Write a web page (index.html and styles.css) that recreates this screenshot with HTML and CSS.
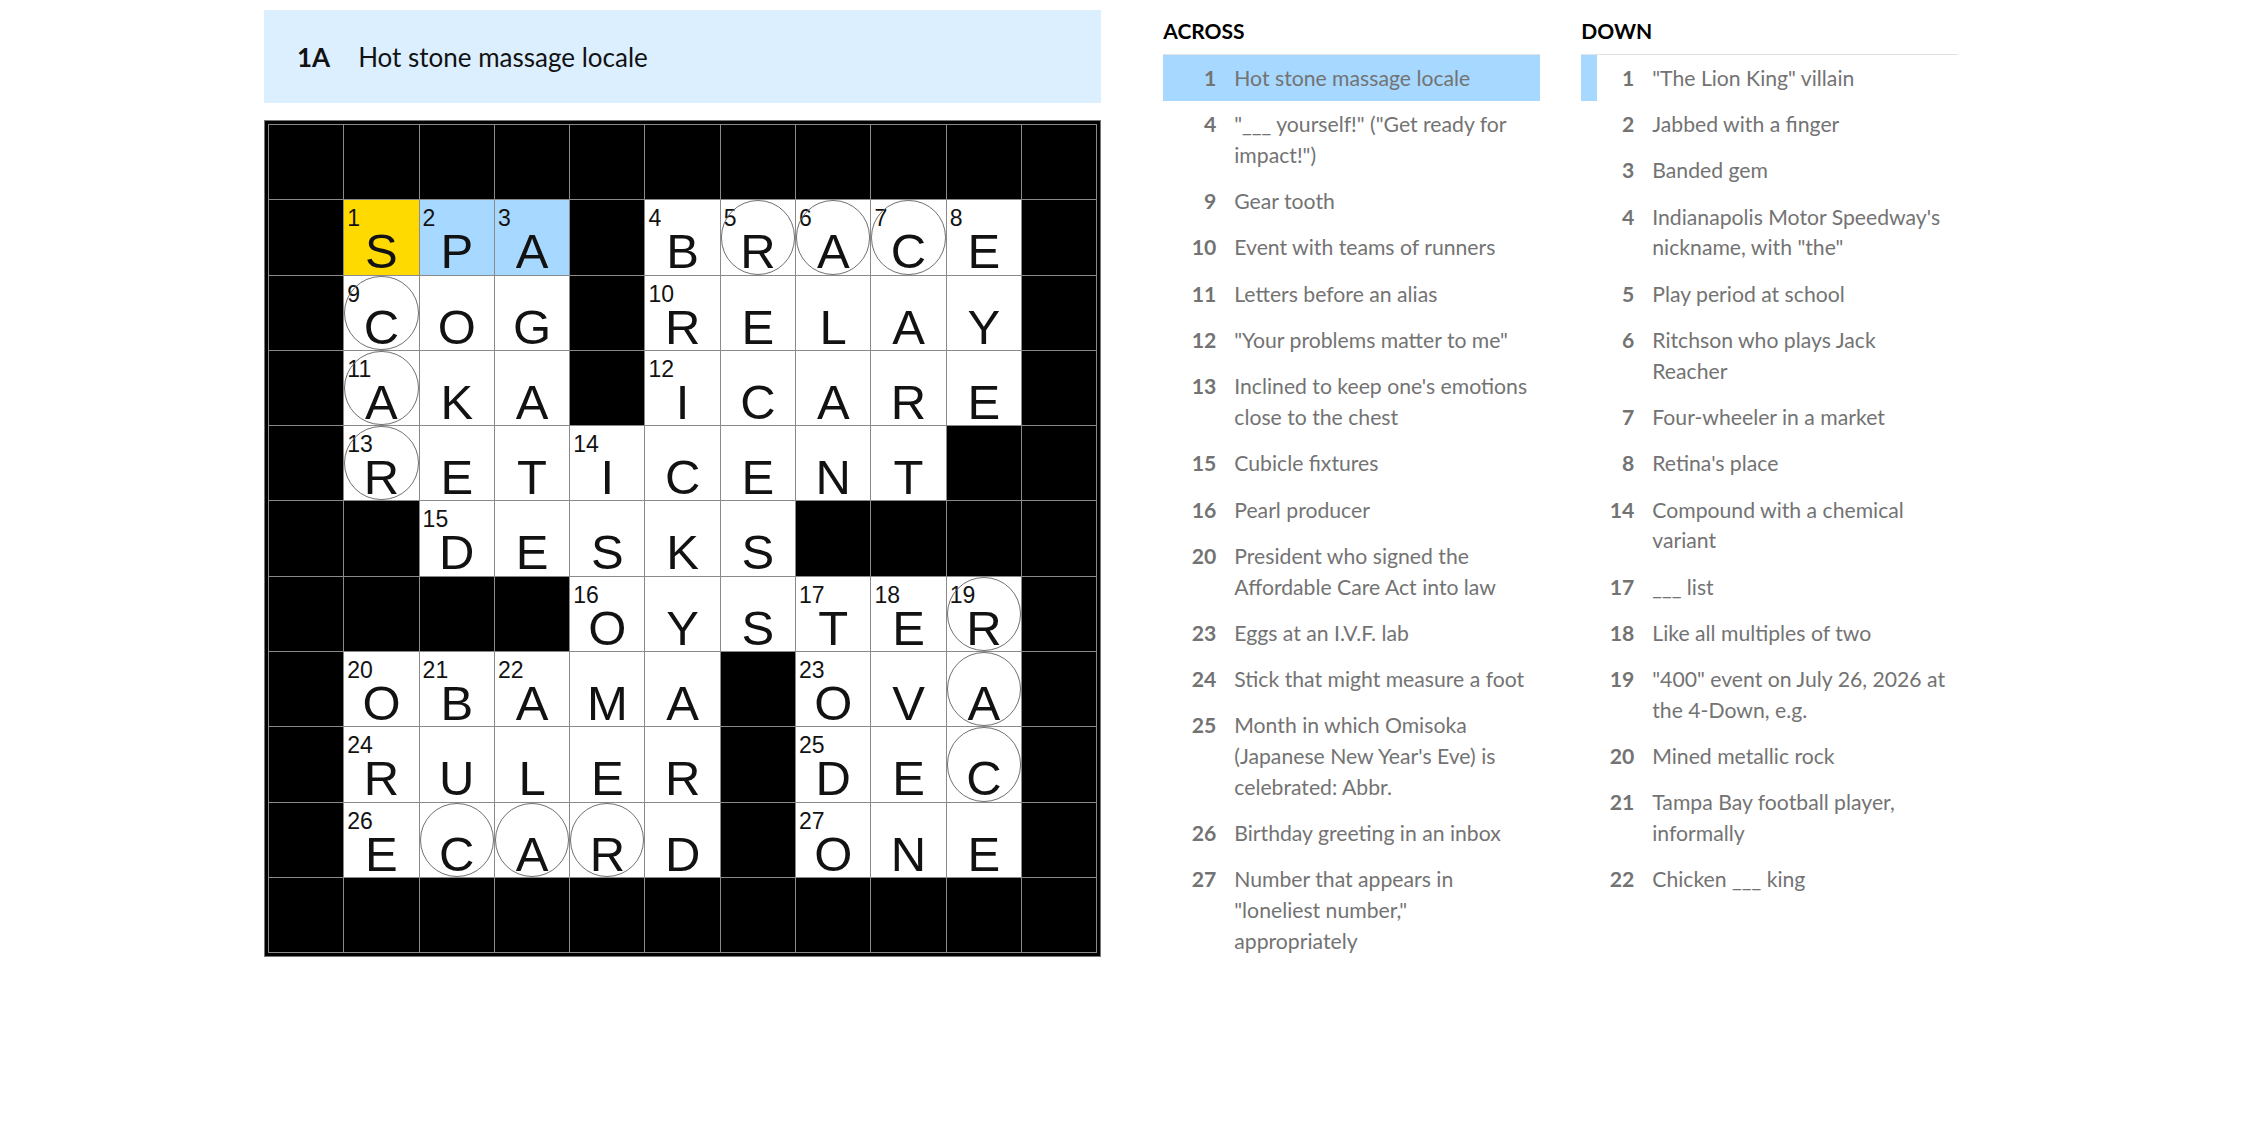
FILE: index.html
```html
<!DOCTYPE html>
<html lang="en">
<head>
    <meta charset="UTF-8">
    <meta name="viewport" content="width=device-width, initial-scale=1.0">
    <title>The Mini Crossword</title>
    <link rel="stylesheet" href="styles.css">
</head>
<body>
<main class="puzzle">
    <section class="board-col">
        <div class="clue-bar">
            <span class="clue-bar-num">1A</span>
            <span class="clue-bar-text">Hot stone massage locale</span>
        </div>

        <div class="board">
            <div class="grid">
                <!-- row 0 -->
                <div class="cell block"></div><div class="cell block"></div><div class="cell block"></div><div class="cell block"></div><div class="cell block"></div><div class="cell block"></div><div class="cell block"></div><div class="cell block"></div><div class="cell block"></div><div class="cell block"></div><div class="cell block"></div>
                <!-- row 1 -->
                <div class="cell block"></div>
                <div class="cell active"><span class="num">1</span><span class="ltr">S</span></div>
                <div class="cell word"><span class="num">2</span><span class="ltr">P</span></div>
                <div class="cell word"><span class="num">3</span><span class="ltr">A</span></div>
                <div class="cell block"></div>
                <div class="cell"><span class="num">4</span><span class="ltr">B</span></div>
                <div class="cell circled"><span class="num">5</span><span class="ltr">R</span></div>
                <div class="cell circled"><span class="num">6</span><span class="ltr">A</span></div>
                <div class="cell circled"><span class="num">7</span><span class="ltr">C</span></div>
                <div class="cell"><span class="num">8</span><span class="ltr">E</span></div>
                <div class="cell block"></div>
                <!-- row 2 -->
                <div class="cell block"></div>
                <div class="cell circled"><span class="num">9</span><span class="ltr">C</span></div>
                <div class="cell"><span class="ltr">O</span></div>
                <div class="cell"><span class="ltr">G</span></div>
                <div class="cell block"></div>
                <div class="cell"><span class="num">10</span><span class="ltr">R</span></div>
                <div class="cell"><span class="ltr">E</span></div>
                <div class="cell"><span class="ltr">L</span></div>
                <div class="cell"><span class="ltr">A</span></div>
                <div class="cell"><span class="ltr">Y</span></div>
                <div class="cell block"></div>
                <!-- row 3 -->
                <div class="cell block"></div>
                <div class="cell circled"><span class="num">11</span><span class="ltr">A</span></div>
                <div class="cell"><span class="ltr">K</span></div>
                <div class="cell"><span class="ltr">A</span></div>
                <div class="cell block"></div>
                <div class="cell"><span class="num">12</span><span class="ltr">I</span></div>
                <div class="cell"><span class="ltr">C</span></div>
                <div class="cell"><span class="ltr">A</span></div>
                <div class="cell"><span class="ltr">R</span></div>
                <div class="cell"><span class="ltr">E</span></div>
                <div class="cell block"></div>
                <!-- row 4 -->
                <div class="cell block"></div>
                <div class="cell circled"><span class="num">13</span><span class="ltr">R</span></div>
                <div class="cell"><span class="ltr">E</span></div>
                <div class="cell"><span class="ltr">T</span></div>
                <div class="cell"><span class="num">14</span><span class="ltr">I</span></div>
                <div class="cell"><span class="ltr">C</span></div>
                <div class="cell"><span class="ltr">E</span></div>
                <div class="cell"><span class="ltr">N</span></div>
                <div class="cell"><span class="ltr">T</span></div>
                <div class="cell block"></div>
                <div class="cell block"></div>
                <!-- row 5 -->
                <div class="cell block"></div>
                <div class="cell block"></div>
                <div class="cell"><span class="num">15</span><span class="ltr">D</span></div>
                <div class="cell"><span class="ltr">E</span></div>
                <div class="cell"><span class="ltr">S</span></div>
                <div class="cell"><span class="ltr">K</span></div>
                <div class="cell"><span class="ltr">S</span></div>
                <div class="cell block"></div>
                <div class="cell block"></div>
                <div class="cell block"></div>
                <div class="cell block"></div>
                <!-- row 6 -->
                <div class="cell block"></div>
                <div class="cell block"></div>
                <div class="cell block"></div>
                <div class="cell block"></div>
                <div class="cell"><span class="num">16</span><span class="ltr">O</span></div>
                <div class="cell"><span class="ltr">Y</span></div>
                <div class="cell"><span class="ltr">S</span></div>
                <div class="cell"><span class="num">17</span><span class="ltr">T</span></div>
                <div class="cell"><span class="num">18</span><span class="ltr">E</span></div>
                <div class="cell circled"><span class="num">19</span><span class="ltr">R</span></div>
                <div class="cell block"></div>
                <!-- row 7 -->
                <div class="cell block"></div>
                <div class="cell"><span class="num">20</span><span class="ltr">O</span></div>
                <div class="cell"><span class="num">21</span><span class="ltr">B</span></div>
                <div class="cell"><span class="num">22</span><span class="ltr">A</span></div>
                <div class="cell"><span class="ltr">M</span></div>
                <div class="cell"><span class="ltr">A</span></div>
                <div class="cell block"></div>
                <div class="cell"><span class="num">23</span><span class="ltr">O</span></div>
                <div class="cell"><span class="ltr">V</span></div>
                <div class="cell circled"><span class="ltr">A</span></div>
                <div class="cell block"></div>
                <!-- row 8 -->
                <div class="cell block"></div>
                <div class="cell"><span class="num">24</span><span class="ltr">R</span></div>
                <div class="cell"><span class="ltr">U</span></div>
                <div class="cell"><span class="ltr">L</span></div>
                <div class="cell"><span class="ltr">E</span></div>
                <div class="cell"><span class="ltr">R</span></div>
                <div class="cell block"></div>
                <div class="cell"><span class="num">25</span><span class="ltr">D</span></div>
                <div class="cell"><span class="ltr">E</span></div>
                <div class="cell circled"><span class="ltr">C</span></div>
                <div class="cell block"></div>
                <!-- row 9 -->
                <div class="cell block"></div>
                <div class="cell"><span class="num">26</span><span class="ltr">E</span></div>
                <div class="cell circled"><span class="ltr">C</span></div>
                <div class="cell circled"><span class="ltr">A</span></div>
                <div class="cell circled"><span class="ltr">R</span></div>
                <div class="cell"><span class="ltr">D</span></div>
                <div class="cell block"></div>
                <div class="cell"><span class="num">27</span><span class="ltr">O</span></div>
                <div class="cell"><span class="ltr">N</span></div>
                <div class="cell"><span class="ltr">E</span></div>
                <div class="cell block"></div>
                <!-- row 10 -->
                <div class="cell block"></div><div class="cell block"></div><div class="cell block"></div><div class="cell block"></div><div class="cell block"></div><div class="cell block"></div><div class="cell block"></div><div class="cell block"></div><div class="cell block"></div><div class="cell block"></div><div class="cell block"></div>
            </div>
        </div>
    </section>

    <section class="clue-lists">
        <div class="clue-list">
            <h3>ACROSS</h3>
            <ol>
                <li class="selected"><span class="n">1</span><span class="t">Hot stone massage locale</span></li>
                <li><span class="n">4</span><span class="t">"___ yourself!" ("Get ready for impact!")</span></li>
                <li><span class="n">9</span><span class="t">Gear tooth</span></li>
                <li><span class="n">10</span><span class="t">Event with teams of runners</span></li>
                <li><span class="n">11</span><span class="t">Letters before an alias</span></li>
                <li><span class="n">12</span><span class="t">"Your problems matter to me"</span></li>
                <li><span class="n">13</span><span class="t">Inclined to keep one's emotions close to the chest</span></li>
                <li><span class="n">15</span><span class="t">Cubicle fixtures</span></li>
                <li><span class="n">16</span><span class="t">Pearl producer</span></li>
                <li><span class="n">20</span><span class="t">President who signed the Affordable Care Act into law</span></li>
                <li><span class="n">23</span><span class="t">Eggs at an I.V.F. lab</span></li>
                <li><span class="n">24</span><span class="t">Stick that might measure a foot</span></li>
                <li><span class="n">25</span><span class="t">Month in which Omisoka (Japanese New Year's Eve) is celebrated: Abbr.</span></li>
                <li><span class="n">26</span><span class="t">Birthday greeting in an inbox</span></li>
                <li><span class="n">27</span><span class="t">Number that appears in "loneliest number," appropriately</span></li>
            </ol>
        </div>

        <div class="clue-list">
            <h3>DOWN</h3>
            <ol>
                <li class="crossing"><span class="n">1</span><span class="t">"The Lion King" villain</span></li>
                <li><span class="n">2</span><span class="t">Jabbed with a finger</span></li>
                <li><span class="n">3</span><span class="t">Banded gem</span></li>
                <li><span class="n">4</span><span class="t">Indianapolis Motor Speedway's nickname, with "the"</span></li>
                <li><span class="n">5</span><span class="t">Play period at school</span></li>
                <li><span class="n">6</span><span class="t">Ritchson who plays Jack Reacher</span></li>
                <li><span class="n">7</span><span class="t">Four-wheeler in a market</span></li>
                <li><span class="n">8</span><span class="t">Retina's place</span></li>
                <li><span class="n">14</span><span class="t">Compound with a chemical variant</span></li>
                <li><span class="n">17</span><span class="t">___ list</span></li>
                <li><span class="n">18</span><span class="t">Like all multiples of two</span></li>
                <li><span class="n">19</span><span class="t">"400" event on July 26, 2026 at the 4-Down, e.g.</span></li>
                <li><span class="n">20</span><span class="t">Mined metallic rock</span></li>
                <li><span class="n">21</span><span class="t">Tampa Bay football player, informally</span></li>
                <li><span class="n">22</span><span class="t">Chicken ___ king</span></li>
            </ol>
        </div>
    </section>
</main>
</body>
</html>
```

FILE: styles.css
```css
body {
    margin: 0;
    background-color: #fff;
    color: #121212;
    font-family: Lato, "Liberation Sans", Arial, sans-serif;
}

.puzzle {
    display: flex;
    align-items: flex-start;
    gap: 62px;
    padding: 10px 0 0 264px;
}

/* left side: current clue + board */
.board-col {
    display: flex;
    flex-direction: column;
    gap: 17px;
}

.clue-bar {
    height: 93px;
    display: flex;
    align-items: center;
    padding-left: 33px;
    background-color: #dcefff;
    font-size: 26px;
}

.clue-bar-num {
    font-weight: 700;
    margin-right: 28px;
}

.board {
    border: 1px solid #777;
    background-color: #000;
    padding: 3px;
}

.grid {
    display: grid;
    grid-template-columns: repeat(11, 74.3px);
    grid-auto-rows: 74.3px;
    gap: 1px;
    background-color: #8a8a8a;
    border: 1px solid #8a8a8a;
}

.cell {
    position: relative;
    background-color: #fff;
    font-family: "Liberation Sans", Arial, sans-serif;
}

.cell.block {
    background-color: #000;
}

.cell.active {
    background-color: #ffda00;
}

.cell.word {
    background-color: #a7d8ff;
}

.cell.circled::after {
    content: "";
    position: absolute;
    inset: 0;
    border: 1px solid #707070;
    border-radius: 50%;
}

.num {
    position: absolute;
    top: 7px;
    left: 3px;
    font-size: 23px;
    line-height: 23px;
}

.ltr {
    display: block;
    padding-top: 27px;
    text-align: center;
    font-size: 49px;
    line-height: 49px;
}

/* right side: clue lists */
.clue-lists {
    display: flex;
    gap: 41px;
}

.clue-list {
    width: 377px;
}

.clue-list h3 {
    margin: 0 0 11px;
    padding-top: 9px;
    font-size: 21px;
    line-height: 24px;
    font-weight: 700;
    color: #000;
}

.clue-list ol {
    list-style: none;
    margin: 0;
    padding: 0;
    border-top: 1px solid #e2e2e2;
}

.clue-list li {
    display: flex;
    padding: 7.8px 8px 7.8px 0;
    font-size: 21.2px;
    line-height: 30.7px;
    color: #737373;
}

.clue-list li .n {
    flex: none;
    width: 53px;
    margin-right: 18px;
    text-align: right;
    font-weight: 700;
}

.clue-list li.selected {
    background-color: #a7d8ff;
}

.clue-list li.crossing {
    box-shadow: inset 16px 0 0 #a7d8ff;
}
```
